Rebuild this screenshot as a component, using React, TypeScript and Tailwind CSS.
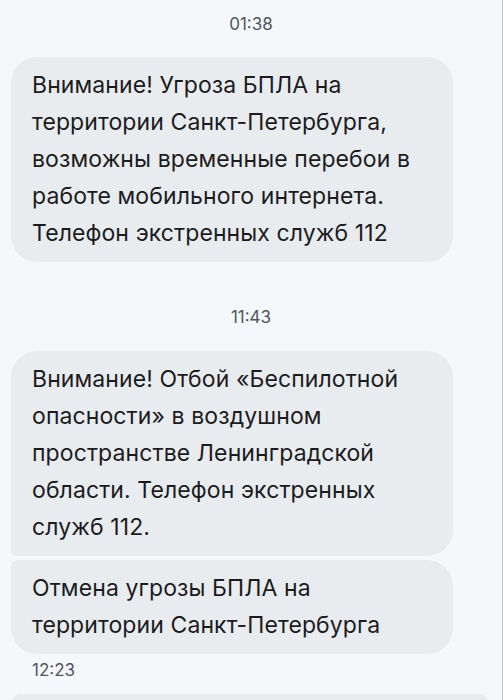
import React from 'react';

type Bubble = { text: string[]; pos?: 'single' | 'first' | 'last'; wide?: boolean };

const font = { fontFamily: 'Inter, "Noto Sans", sans-serif' };

const TimeLabel = ({ time, align = 'center', className = '' }: { time: string; align?: 'center' | 'left'; className?: string }) => (
  <div
    className={`h-[22px] leading-[22px] text-[17px] text-[#51565b] ${align === 'center' ? 'text-center' : 'pl-[21px]'} ${className}`}
  >
    {time}
  </div>
);

const MessageBubble = ({ text, pos = 'single', wide }: Bubble) => {
  // grouped messages get tight corners on the joined side
  const corners =
    pos === 'first'
      ? 'rounded-[26px] rounded-bl-[6px]'
      : pos === 'last'
        ? 'rounded-[26px] rounded-tl-[6px]'
        : 'rounded-[26px]';
  return (
    <div className={`${wide ? 'w-[478px]' : 'w-[442px]'} bg-[#e9ecef] ${corners} pl-[21px] pr-4 py-[10px]`}>
      {text.map((line, i) => (
        <div key={i} className="text-[23px] leading-[37px] tracking-[0.1px] text-[#1c1c1e] whitespace-nowrap">
          {line}
        </div>
      ))}
    </div>
  );
};

export default function App() {
  return (
    <div style={font} className="h-[700px] w-[503px] overflow-hidden bg-[#f4f8fb] border-r border-[#bfc3c6]">
      <div className="flex flex-col px-[11px]">
        <TimeLabel time="01:38" className="mt-[13px] mb-[22px]" />
        <MessageBubble
          text={[
            'Внимание! Угроза БПЛА на',
            'территории Санкт-Петербурга,',
            'возможны временные перебои в',
            'работе мобильного интернета.',
            'Телефон экстренных служб 112',
          ]}
        />

        <TimeLabel time="11:43" className="mt-[44px] mb-[23px]" />
        <div className="flex flex-col gap-[4px]">
          <MessageBubble
            pos="first"
            text={[
              'Внимание! Отбой «Беспилотной',
              'опасности» в воздушном',
              'пространстве Ленинградской',
              'области. Телефон экстренных',
              'служб 112.',
            ]}
          />
          <MessageBubble pos="last" text={['Отмена угрозы БПЛА на', 'территории Санкт-Петербурга']} />
        </div>
        <TimeLabel time="12:23" align="left" className="mt-[5px] mb-[13px]" />

        <MessageBubble wide text={['', '']} />
      </div>
    </div>
  );
}
